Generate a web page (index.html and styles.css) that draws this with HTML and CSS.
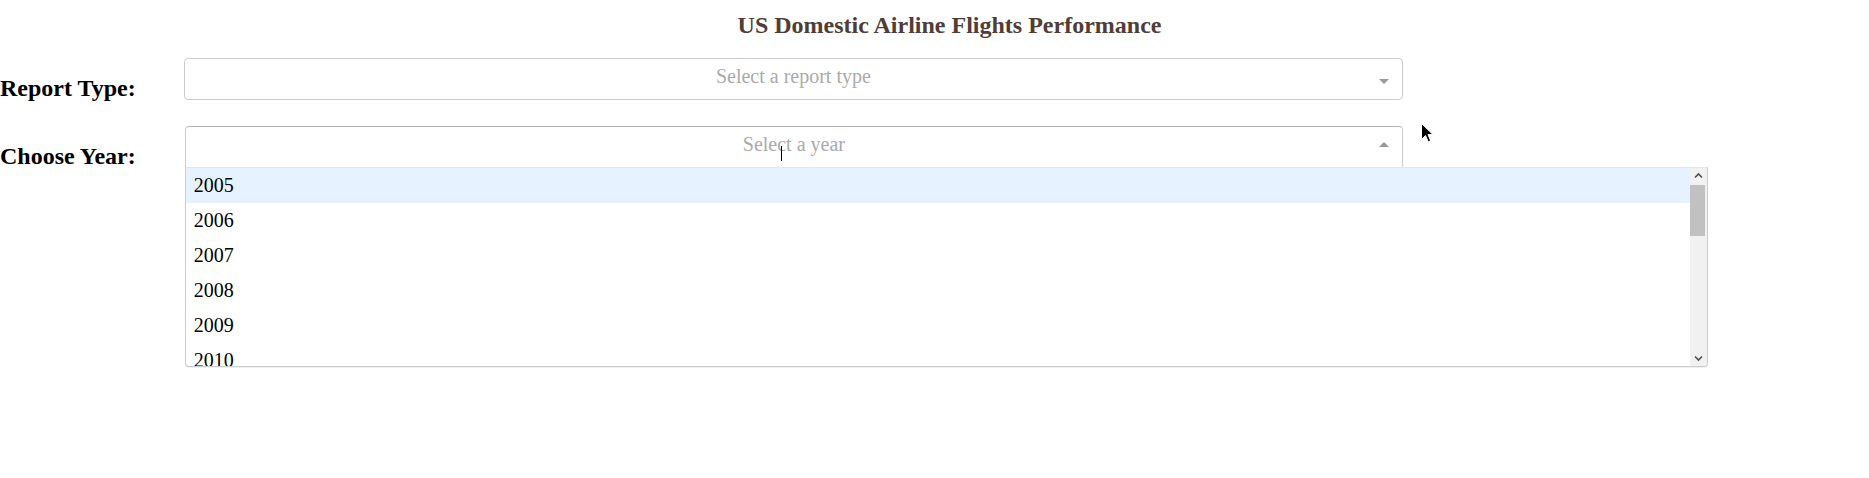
FILE: index.html
```html
<!DOCTYPE html>
<html>
<head>
<meta charset="utf-8">
<title>US Domestic Airline Flights Performance</title>
<link rel="stylesheet" href="styles.css">
</head>
<body>
<div class="app">
  <h1 class="title">US Domestic Airline Flights Performance</h1>
  <div class="row">
    <div class="label-box"><h2 class="label">Report Type:</h2></div>
    <div class="dropdown">
      <div class="control">
        <span class="placeholder">Select a report type</span>
        <span class="arrow down"></span>
      </div>
    </div>
  </div>
  <div class="row">
    <div class="label-box"><h2 class="label label-wide">Choose Year:</h2></div>
    <div class="dropdown">
      <div class="control open">
        <span class="placeholder">Select a year</span>
        <span class="caret"></span>
        <span class="arrow up"></span>
      </div>
      <div class="menu">
        <div class="options">
          <div class="option focused">2005</div>
          <div class="option">2006</div>
          <div class="option">2007</div>
          <div class="option">2008</div>
          <div class="option">2009</div>
          <div class="option">2010</div>
        </div>
        <div class="scrollbar">
          <div class="sb-btn">
            <svg width="17" height="17" viewBox="0 0 17 17"><path d="M5 9.5 L8.5 6 L12 9.5" fill="none" stroke="#505050" stroke-width="1.6"/></svg>
          </div>
          <div class="sb-track"><div class="sb-thumb"></div></div>
          <div class="sb-btn">
            <svg width="17" height="17" viewBox="0 0 17 17"><path d="M5 7.5 L8.5 11 L12 7.5" fill="none" stroke="#505050" stroke-width="1.6"/></svg>
          </div>
        </div>
      </div>
    </div>
  </div>
  <svg class="pointer" width="13" height="20" viewBox="0 0 13 20"><path d="M0.5 0.5 L0.5 16.5 L4.5 12.5 L7.2 18.8 L9.6 17.8 L7 11.6 L12 11.6 Z" fill="#000" stroke="#fff" stroke-width="1"/></svg>
</div>
</body>
</html>
```

FILE: styles.css
```css
html, body {
  margin: 0;
  padding: 0;
  background: #fff;
}

body {
  font-family: "Liberation Serif", "Times New Roman", serif;
  color: #000;
}

.app {
  position: relative;
  display: flow-root;
  width: 1869px;
  height: 478px;
}

.title {
  margin: 12px 0 16px;
  padding-left: 30px;
  text-align: center;
  font-size: 24px;
  font-weight: bold;
  color: #503D36;
}

.row {
  display: flex;
  width: 1406px;
}

.label {
  margin: 19.92px 45px 20.92px 0;
  font-size: 24px;
  font-weight: bold;
}

.label.label-wide {
  margin-right: 46px;
}

.dropdown {
  flex: 1;
  position: relative;
  padding: 3px;
  font-size: 20px;
}

.control {
  position: relative;
  box-sizing: border-box;
  height: 42px;
  border: 1px solid #ccc;
  border-radius: 4px;
  background: #fff;
}

.control.open {
  border-color: #b3b3b3 #ccc #d9d9d9;
  border-bottom-left-radius: 0;
  border-bottom-right-radius: 0;
}

.placeholder {
  position: absolute;
  left: 0;
  right: 0;
  top: 0;
  padding: 0 10px;
  line-height: 34px;
  text-align: center;
  color: #aaa;
  white-space: nowrap;
}

.caret {
  position: absolute;
  left: 595px;
  top: 19px;
  width: 1px;
  height: 15px;
  background: #000;
}

.arrow {
  position: absolute;
  right: 13px;
  width: 0;
  height: 0;
  border-style: solid;
}

.arrow.down {
  top: 20px;
  border-width: 5px 5px 2.5px;
  border-color: #999 transparent transparent;
}

.arrow.up {
  top: 15px;
  border-width: 0 5px 5px;
  border-color: transparent transparent #999;
}

.menu {
  position: absolute;
  left: 3px;
  top: 44px;
  z-index: 2;
  box-sizing: border-box;
  width: 1523px;
  height: 200px;
  display: flex;
  border: 1px solid #ccc;
  border-top-color: #e6e6e6;
  border-bottom-left-radius: 4px;
  border-bottom-right-radius: 4px;
  background: #fff;
  box-shadow: 0 1px 0 rgba(0, 0, 0, 0.06);
  overflow: hidden;
}

.options {
  flex: 1;
  overflow: hidden;
}

.option {
  display: flex;
  align-items: center;
  height: 35px;
  padding: 0 8px;
  color: #000;
  white-space: nowrap;
}

.option.focused {
  background: #e6f2ff;
}

.scrollbar {
  width: 17px;
  display: flex;
  flex-direction: column;
  background: #f1f1f1;
}

.sb-btn {
  height: 17px;
  flex: 0 0 17px;
}

.sb-btn svg {
  display: block;
}

.sb-track {
  flex: 1;
}

.sb-thumb {
  height: 51px;
  margin: 0 2px 0 0;
  background: #c1c1c1;
}

.pointer {
  position: absolute;
  left: 1421px;
  top: 123px;
  z-index: 5;
}
```
